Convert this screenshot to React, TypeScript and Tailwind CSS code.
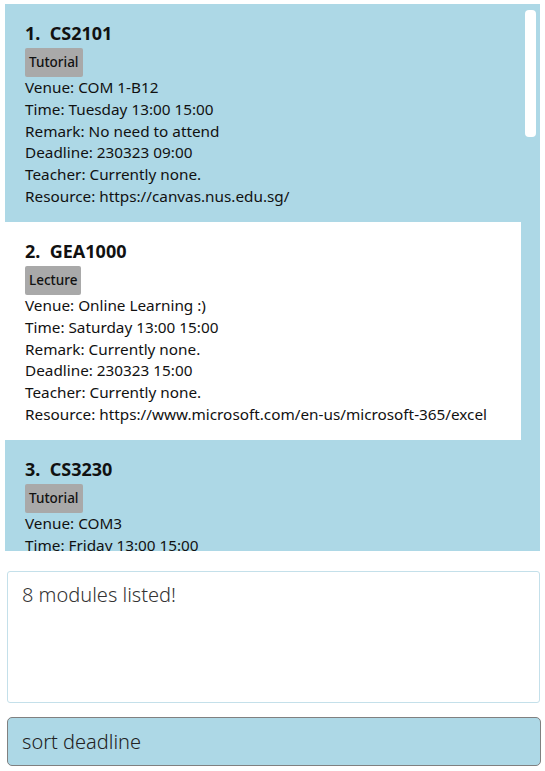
import React from "react"

interface Module {
  code: string
  tag: string
  venue: string
  time: string
  remark: string
  deadline: string
  teacher: string
  resource: string
}

const modules: Module[] = [
  {
    code: "CS2101",
    tag: "Tutorial",
    venue: "COM 1-B12",
    time: "Tuesday 13:00 15:00",
    remark: "No need to attend",
    deadline: "230323 09:00",
    teacher: "Currently none.",
    resource: "https://canvas.nus.edu.sg/",
  },
  {
    code: "GEA1000",
    tag: "Lecture",
    venue: "Online Learning :)",
    time: "Saturday 13:00 15:00",
    remark: "Currently none.",
    deadline: "230323 15:00",
    teacher: "Currently none.",
    resource: "https://www.microsoft.com/en-us/microsoft-365/excel",
  },
  {
    code: "CS3230",
    tag: "Tutorial",
    venue: "COM3",
    time: "Friday 13:00 15:00",
    remark: "Currently none.",
    deadline: "230324 09:00",
    teacher: "Currently none.",
    resource: "Currently none.",
  },
]

function ModuleCard({ mod, index }: { mod: Module; index: number }) {
  const bg = index % 2 === 0 ? "bg-[#add8e6]" : "bg-white"
  return (
    <div className={`${bg} h-[218px] shrink-0 pl-[20px] pt-[14px] pb-[13px]`}>
      <div className="h-[30px] text-[18px] leading-[30px] font-bold text-[#111]">
        {index + 1}.&nbsp;&nbsp;{mod.code}
      </div>
      <div className="flex h-[29px]">
        <span className="flex items-center h-[29px] px-[4px] bg-[#a9a9a9] rounded-[2px] text-[13.5px] font-medium text-[#111]">
          {mod.tag}
        </span>
      </div>
      <div className="text-[15.3px] leading-[21.8px] text-[#111]">
        <div>Venue: {mod.venue}</div>
        <div>Time: {mod.time}</div>
        <div>Remark: {mod.remark}</div>
        <div>Deadline: {mod.deadline}</div>
        <div>Teacher: {mod.teacher}</div>
        <div>Resource: {mod.resource}</div>
      </div>
    </div>
  )
}

export default function App() {
  return (
    <div className="w-[545px] h-[771px] bg-white pt-[4px] overflow-hidden" style={{ fontFamily: '"Noto Sans", "Open Sans", sans-serif' }}>
      <div className="ml-[5px] w-[535px] h-[547px] bg-[#add8e6] flex overflow-hidden">
        <div className="w-[516px] flex flex-col">
          {modules.map((m, i) => (
            <ModuleCard key={m.code} mod={m} index={i} />
          ))}
        </div>
        <div className="pl-[4px] pt-[6px]">
          <div className="w-[11px] h-[127px] bg-white rounded-[4px]" />
        </div>
      </div>

      <div className="ml-[7px] mt-[20px] w-[533px] h-[132px] bg-white border border-[#c4e0ea] rounded-[3px] pl-[14px] pt-[9px]">
        <div className="text-[20px] leading-[28px] font-light text-[#333]">8 modules listed!</div>
      </div>

      <div className="ml-[7px] mt-[14px] w-[534px] h-[49px] bg-[#add8e6] border border-[#808080] rounded-[5px] flex items-center pl-[14px]">
        <span className="text-[20px] font-light text-[#222]">sort deadline</span>
      </div>
    </div>
  )
}
